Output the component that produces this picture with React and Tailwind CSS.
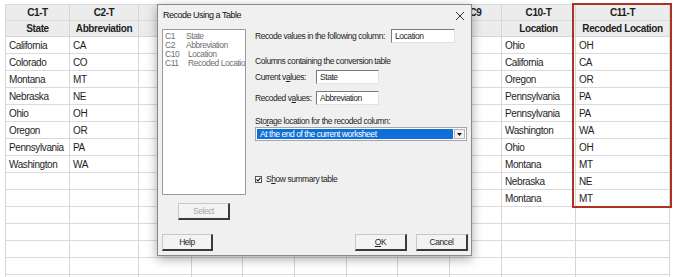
import React from 'react';

const columns = [
  { w: 'w-[65px]', name: 'C1-T', label: 'State' },
  { w: 'w-[69px]', name: 'C2-T', label: 'Abbreviation' },
  { w: 'w-[53px]', name: '', label: '' },
  { w: 'w-[51px]', name: '', label: '' },
  { w: 'w-[52px]', name: '', label: '' },
  { w: 'w-[52px]', name: '', label: '' },
  { w: 'w-[51px]', name: '', label: '' },
  { w: 'w-[52px]', name: '', label: '' },
  { w: 'w-[52px]', name: 'C9', label: '' },
  { w: 'w-[74px]', name: 'C10-T', label: 'Location' },
  { w: 'w-[94px]', name: 'C11-T', label: 'Recoded Location' },
];

const data = {
  0: ['California', 'Colorado', 'Montana', 'Nebraska', 'Ohio', 'Oregon', 'Pennsylvania', 'Washington'],
  1: ['CA', 'CO', 'MT', 'NE', 'OH', 'OR', 'PA', 'WA'],
  9: ['Ohio', 'California', 'Oregon', 'Pennsylvania', 'Pennsylvania', 'Washington', 'Ohio', 'Montana', 'Nebraska', 'Montana'],
  10: ['OH', 'CA', 'OR', 'PA', 'PA', 'WA', 'OH', 'MT', 'NE', 'MT'],
};

const ROWS = 15;

const Sheet = () => (
  <div className="flex pl-[5px] pt-[4px] font-['Liberation_Sans',Arial,sans-serif] text-[10px] tracking-[-0.4px] text-[#1e1e1e]">
    {columns.map((col, ci) => (
      <div key={ci} className={`${col.w} shrink-0 flex flex-col border-r border-[#d6d6d6] ${ci === 0 ? 'border-l' : ''}`}>
        <div className="h-[17px] flex items-center justify-center bg-[#ececec] border-t border-b border-[#dcdcdc] font-bold">
          {col.name}
        </div>
        <div className="h-[16px] flex items-center justify-center bg-[#ececec] border-b border-[#d6d6d6] font-bold whitespace-nowrap">
          {col.label}
        </div>
        {Array.from({ length: ROWS }).map((_, ri) => (
          <div key={ri} className="h-[17px] flex items-center pl-[3px] bg-white border-b border-[#dadada] whitespace-nowrap">
            {data[ci] ? data[ci][ri] || '' : ''}
          </div>
        ))}
      </div>
    ))}
  </div>
);

const TextBox = ({ value, w }) => (
  <div className={`${w} h-[14px] bg-white border-t border-l border-[#7a7a7a] border-r border-b border-r-[#e2e2e2] border-b-[#e2e2e2] flex items-center pl-[3px] text-[#1e1e1e]`}>
    {value}
  </div>
);

const Button = ({ children, w, disabled }) => (
  <div className={`${w} h-[17px] flex items-center justify-center bg-[#f3f3f3] border-t border-l border-[#c8c8c8] border-b-2 border-r-2 border-b-[#3a3a3a] border-r-[#3a3a3a] ${disabled ? 'text-[#a8a8a8]' : 'text-[#1e1e1e]'}`}>
    {children}
  </div>
);

const Dialog = () => (
  <div className="absolute left-[157px] top-[4px] w-[315px] h-[252px] flex flex-col bg-[#f0f0f0] border border-[#8a8a8a] shadow-[0_3px_10px_rgba(0,0,0,0.35)] font-['Liberation_Sans',Arial,sans-serif] text-[8.5px] tracking-[-0.45px] text-[#1e1e1e]">
    {/* title bar */}
    <div className="h-[21px] shrink-0 flex items-center justify-between pl-[5px] pr-[6px]">
      <span className="text-[9px] tracking-[-0.5px] text-[#111]">Recode Using a Table</span>
      <svg width="10" height="10" viewBox="0 0 10 10" className="stroke-[#333]">
        <path d="M1 1 L9 9 M9 1 L1 9" strokeWidth="1" fill="none" />
      </svg>
    </div>

    {/* body */}
    <div className="flex flex-1 pl-[4px] pt-[3px]">
      <div className="flex flex-col w-[84px] shrink-0">
        <div className="h-[166px] bg-white border border-[#9a9a9a] pt-[2px] pl-[2px] overflow-hidden text-[#6f6f6f] leading-[9px]">
          <div className="flex whitespace-nowrap"><span className="w-[21px] shrink-0">C1</span><span>State</span></div>
          <div className="flex whitespace-nowrap"><span className="w-[21px] shrink-0">C2</span><span>Abbreviation</span></div>
          <div className="flex whitespace-nowrap"><span className="w-[23px] shrink-0">C10</span><span>Location</span></div>
          <div className="flex whitespace-nowrap"><span className="w-[23px] shrink-0">C11</span><span>Recoded Location</span></div>
        </div>
        <div className="mt-[8px] ml-[16px]">
          <Button w="w-[52px]" disabled>Select</Button>
        </div>
      </div>

      <div className="flex flex-col ml-[9px] flex-1">
        <div className="flex items-center h-[14px]">
          <span className="w-[136px] shrink-0">Recode values in the following column:</span>
          <TextBox value="Location" w="w-[64px]" />
        </div>
        <div className="mt-[13px] h-[10px] leading-[10px]">Columns containing the conversion table</div>
        <div className="flex items-center h-[14px] mt-[4px]">
          <span className="w-[61px] shrink-0">Current v<span className="underline">a</span>lues:</span>
          <TextBox value="State" w="w-[63px]" />
        </div>
        <div className="flex items-center h-[14px] mt-[7px]">
          <span className="w-[61px] shrink-0">Recoded v<span className="underline">a</span>lues:</span>
          <TextBox value="Abbreviation" w="w-[63px]" />
        </div>
        <div className="mt-[11px] h-[10px] leading-[10px]">Sto<span className="underline">r</span>age location for the recoded column:</div>
        <div className="mt-[1px] w-[212px] h-[14px] flex bg-white border border-[#a5a5a5] p-[1px]">
          <div className="flex-1 bg-[#0f6fd9] text-white flex items-center pl-[3px]">
            At the end of the current worksheet
          </div>
          <div className="w-[11px] ml-[1px] bg-[#f2f2f2] border border-[#b5b5b5] flex items-center justify-center">
            <svg width="5" height="3" viewBox="0 0 5 3"><path d="M0 0 H5 L2.5 3 Z" fill="#111" /></svg>
          </div>
        </div>
        <div className="flex items-center mt-[33px] h-[10px]">
          <div className="w-[7px] h-[7px] bg-white border border-[#555] flex items-center justify-center">
            <svg width="5" height="5" viewBox="0 0 5 5"><path d="M0.5 2.5 L2 4 L4.5 0.8" stroke="#111" strokeWidth="1.1" fill="none" /></svg>
          </div>
          <span className="ml-[4px]">S<span className="underline">h</span>ow summary table</span>
        </div>
      </div>
    </div>

    {/* footer */}
    <div className="flex items-center justify-between pl-[4px] pr-[3px] pb-[4px]">
      <Button w="w-[51px]">Help</Button>
      <div className="flex gap-[9px]">
        <Button w="w-[52px]"><span className="underline">O</span>K</Button>
        <Button w="w-[52px]">Cancel</Button>
      </div>
    </div>
  </div>
);

export default function App() {
  return (
    <div className="relative w-[676px] h-[277px] overflow-hidden bg-white">
      <Sheet />
      <Dialog />
      <div className="absolute left-[572px] top-[3px] w-[100px] h-[205px] border-2 border-[#ac3224]" />
    </div>
  );
}
